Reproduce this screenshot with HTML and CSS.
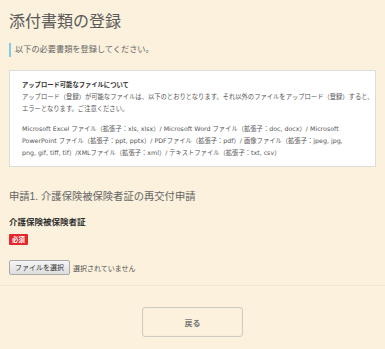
FILE: index.html
```html
<!DOCTYPE html>
<html lang="ja">
<head>
    <meta charset="UTF-8">
    <title>添付書類の登録</title>
    <link rel="stylesheet" href="styles.css">
</head>
<body>
    <div class="main">
        <h1 class="title">添付書類の登録</h1>
        <p class="lead">以下の必要書類を登録してください。</p>

        <div class="notice">
            <p class="notice_head">アップロード可能なファイルについて</p>
            <p class="nowrap">アップロード（登録）が可能なファイルは、以下のとおりとなります。それ以外のファイルをアップロード（登録）すると、<br>エラーとなります。ご注意ください。</p>
            <p class="types">Microsoft Excel ファイル（拡張子：xls, xlsx）/ Microsoft Word ファイル（拡張子：doc, docx）/ Microsoft<br>PowerPoint ファイル（拡張子：ppt, pptx）/ PDFファイル（拡張子：pdf）/ 画像ファイル（拡張子：jpeg, jpg,<br>png, gif, tiff, tif）/XMLファイル（拡張子：xml）/ テキストファイル（拡張子：txt, csv）</p>
        </div>

        <h2 class="apply">申請1. 介護保険被保険者証の再交付申請</h2>
        <p class="label">介護保険被保険者証</p>
        <span class="must">必須</span>
        <div class="file">
            <span class="file_btn">ファイルを選択</span>
            <span class="file_name">選択されていません</span>
        </div>
    </div>
    <div class="foot">
        <button class="back" type="button">戻る</button>
    </div>
</body>
</html>
```

FILE: styles.css
```css
*{margin: 0;padding: 0;box-sizing: border-box;}
body{
    background: #fbf1dc;
    color: #555;
    font-family: "Liberation Sans", "Noto Sans CJK JP", sans-serif;
}
.main{
    padding: 10px 9px 10px 9px;
}
.title{
    font-family: "Noto Sans CJK JP", sans-serif;
    font-size: 16px;
    font-weight: normal;
    line-height: 20px;
    color: #5a5a5a;
}
.lead{
    margin-top: 13px;
    border-left: 2px solid #7fcbe8;
    padding-left: 4px;
    font-size: 8.2px;
    line-height: 14px;
    color: #666;
}
.notice{
    margin-top: 13px;
    background: #fff;
    border: 1px solid #dcdcdc;
    padding: 8px 4px 7px 12px;
    font-size: 6.3px;
    line-height: 12px;
    color: #555;
}
.notice_head{
    font-weight: bold;
    color: #333;
}
.nowrap{
    white-space: nowrap;
}
.notice .types{
    margin-top: 8px;
    font-family: "DejaVu Sans", "Noto Sans CJK JP", sans-serif;
}
.apply{
    margin-top: 23px;
    font-size: 10.3px;
    font-weight: normal;
    line-height: 14px;
    color: #666;
}
.label{
    margin-top: 12px;
    font-size: 8.5px;
    font-weight: bold;
    line-height: 12px;
    color: #333;
}
.must{
    display: inline-block;
    margin-top: 5px;
    height: 11px;
    padding: 0 3px;
    background: #e5262b;
    border-radius: 1px;
    color: #fff;
    font-size: 6.5px;
    line-height: 11px;
    font-weight: bold;
}
.file{
    display: flex;
    align-items: center;
    gap: 3px;
    margin-top: 14px;
    font-size: 7px;
}
.file_btn{
    display: inline-block;
    width: 61px;
    height: 15px;
    line-height: 13px;
    text-align: center;
    background: linear-gradient(#f6f6f6, #dedede);
    border: 1px solid #aaa;
    border-radius: 2px;
    color: #333;
}
.file_name{
    color: #555;
}
.foot{
    border-top: 1px solid #f1e6cf;
    padding-top: 21px;
    text-align: center;
}
.back{
    width: 101px;
    height: 30px;
    background: #fbf1dc;
    border: 1px solid #cfcbbf;
    border-radius: 3px;
    box-shadow: inset 0 0 1px #e0dccf;
    color: #777;
    font-family: "Noto Sans CJK JP", sans-serif;
    font-size: 8px;
    font-weight: bold;
}
```
